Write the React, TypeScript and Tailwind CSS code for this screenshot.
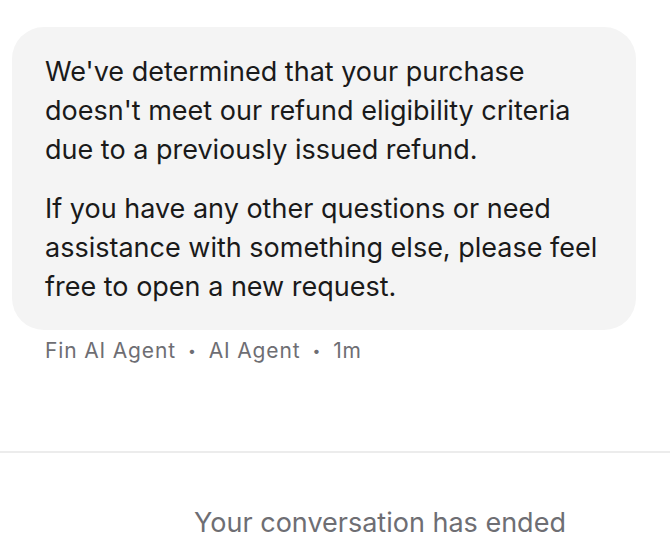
import React from 'react';

const App = () => {
  return (
    <div className="w-[670px] h-[560px] bg-white overflow-hidden" style={{ fontFamily: 'Inter, "Noto Sans", sans-serif' }}>
      {/* Message */}
      <div className="pt-[27px] pl-[12px]">
        <div className="w-[624px] bg-[#f4f4f4] rounded-[32px] px-[33px] pt-[25px] pb-[24px] text-[27px] leading-[39px] text-[#1a1a1a]">
          <p>We've determined that your purchase doesn't meet our refund eligibility criteria due to a previously issued refund.</p>
          <p className="mt-[20px]">If you have any other questions or need assistance with something else, please feel free to open a new request.</p>
        </div>
        <div className="mt-[7px] pl-[33px] text-[21px] leading-[28px] tracking-[0.85px] text-[#6e6e73] flex items-center gap-[12px]">
          <span>Fin AI Agent</span>
          <span className="text-[14px]">•</span>
          <span>AI Agent</span>
          <span className="text-[14px]">•</span>
          <span>1m</span>
        </div>
      </div>

      {/* Divider */}
      <div className="mt-[86px] h-[2px] bg-[#ececec]" />

      {/* Ended */}
      <div className="pt-[54px] pl-[90px] text-center text-[27px] leading-[32px] text-[#6e6e73]">
        Your conversation has ended
      </div>
    </div>
  );
};

export default App;
